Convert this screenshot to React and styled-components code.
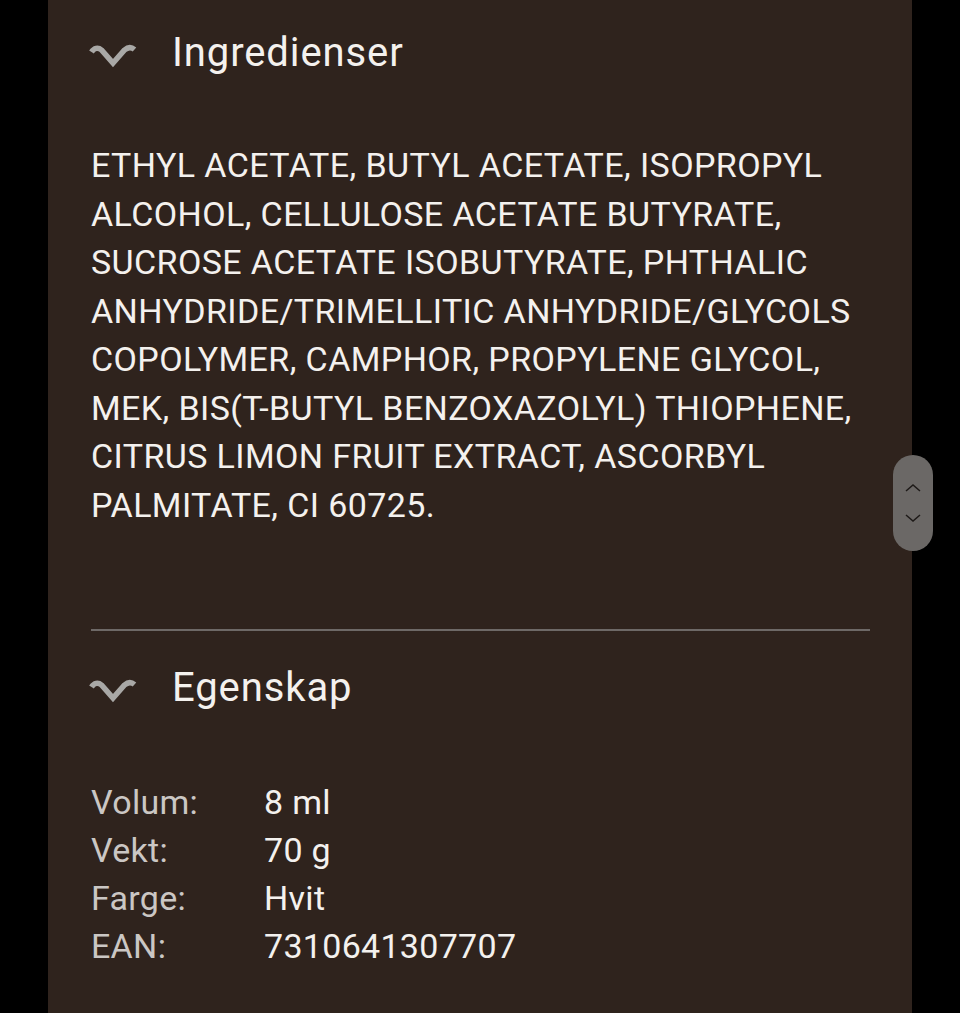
import { Fragment } from "react";
import styled, { createGlobalStyle } from "styled-components";

const GlobalStyle = createGlobalStyle`
  html, body {
    margin: 0;
    padding: 0;
    background: #000;
  }
  body {
    font-family: Roboto, "Noto Sans", sans-serif;
  }
`;

const Page = styled.div`
  width: 960px;
  min-height: 1013px;
  background: #000;
`;

const Panel = styled.div`
  margin-left: 48px;
  width: 864px;
  min-height: 1013px;
  background: #2f231d;
  padding: 0 42px 0 43px;
  box-sizing: border-box;
`;

const Section = styled.section`
  padding-top: ${(p) => p.top}px;
`;

const Header = styled.div`
  display: flex;
  align-items: center;
  height: 40px;
`;

const Chevron = styled.svg`
  width: 48px;
  height: 28px;
  margin-left: -2px;
  margin-right: 35px;
  margin-top: 4px;
  flex-shrink: 0;
`;

const Title = styled.h2`
  margin: 0;
  font-size: 40px;
  font-weight: 400;
  color: #f4f1ee;
  letter-spacing: 0.9px;
`;

const Ingredients = styled.p`
  margin: 69px 0 0;
  font-size: 34px;
  line-height: 48.5px;
  color: #f4f1ee;
  letter-spacing: 0.4px;
`;

const Divider = styled.hr`
  margin: 100px 0 0;
  border: none;
  height: 2px;
  background: #6e6967;
`;

const Props = styled.dl`
  display: grid;
  grid-template-columns: 173px 1fr;
  margin: 71px 0 0;
  font-size: 34px;
  line-height: 48px;
  letter-spacing: 0.3px;
`;

const Label = styled.dt`
  color: #cbc7c4;
`;

const Value = styled.dd`
  margin: 0;
  color: #f4f1ee;
`;

const Scroller = styled.div`
  position: fixed;
  left: 893px;
  top: 455px;
  width: 40px;
  height: 96px;
  border-radius: 20px;
  background: #6b6866;
  display: flex;
  flex-direction: column;
  align-items: center;
  justify-content: center;
  gap: 20px;
`;

function ChevronIcon() {
  return (
    <Chevron viewBox="0 0 48 28">
      <path
        d="M2.5 12 C5 8 9 7 12.5 10 L24 23 L35.5 10 C39 7 42.5 7 45.5 9.5"
        fill="none"
        stroke="#a9a8a6"
        strokeWidth="5.5"
        strokeLinejoin="miter"
      />
    </Chevron>
  );
}

function Arrow({ up }) {
  return (
    <svg width="18" height="10" viewBox="0 0 18 10">
      <path
        d={up ? "M2 8 L9 2 L16 8" : "M2 2 L9 8 L16 2"}
        fill="none"
        stroke="#1e1a18"
        strokeWidth="1.5"
      />
    </svg>
  );
}

const properties = [
  ["Volum:", "8 ml"],
  ["Vekt:", "70 g"],
  ["Farge:", "Hvit"],
  ["EAN:", "7310641307707"],
];

export default function App() {
  return (
    <Page>
      <GlobalStyle />
      <Panel>
        <Section top={32}>
          <Header>
            <ChevronIcon />
            <Title>Ingredienser</Title>
          </Header>
          <Ingredients>
            ETHYL ACETATE, BUTYL ACETATE, ISOPROPYL ALCOHOL, CELLULOSE ACETATE
            BUTYRATE, SUCROSE ACETATE ISOBUTYRATE, PHTHALIC
            ANHYDRIDE/TRIMELLITIC ANHYDRIDE/GLYCOLS COPOLYMER, CAMPHOR,
            PROPYLENE GLYCOL, MEK, BIS(T-BUTYL BENZOXAZOLYL) THIOPHENE, CITRUS
            LIMON FRUIT EXTRACT, ASCORBYL PALMITATE, CI 60725.
          </Ingredients>
          <Divider />
        </Section>
        <Section top={36}>
          <Header>
            <ChevronIcon />
            <Title>Egenskap</Title>
          </Header>
          <Props>
            {properties.map(([k, v]) => (
              <Fragment key={k}>
                <Label>{k}</Label>
                <Value>{v}</Value>
              </Fragment>
            ))}
          </Props>
        </Section>
      </Panel>
      <Scroller>
        <Arrow up />
        <Arrow />
      </Scroller>
    </Page>
  );
}
